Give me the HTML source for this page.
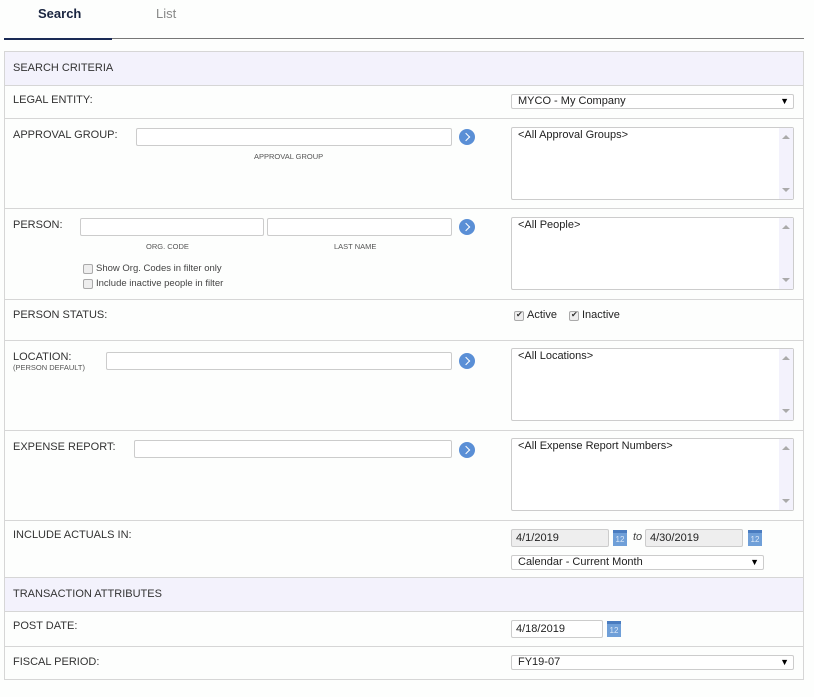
<!DOCTYPE html><html><head><style>
body{margin:0;width:814px;height:697px;background:#fdfefd;font-family:"Liberation Sans",sans-serif;font-size:11px;color:#222;position:relative;overflow:hidden}
.a{position:absolute}
.lbl{position:absolute;left:13px;font-size:11px;color:#333}
.hr{position:absolute;left:4px;width:800px;height:1px;background:#d6d6d6}
.hd{position:absolute;left:5px;width:798px;background:#f3f2fc}
.in{position:absolute;border:1px solid #ccc;border-radius:2px;background:#fff;height:18px;box-sizing:border-box}
.btn{position:absolute;width:16px;height:16px;border-radius:50%;background:#5a8fd6}
.btn:after{content:"";position:absolute;left:4px;top:4.5px;width:5px;height:5px;border-top:1.2px solid #fff;border-right:1.2px solid #fff;transform:rotate(45deg)}
.lb{position:absolute;left:511px;width:283px;height:73px;border:1px solid #ccc;border-radius:2px;background:#fff;box-sizing:border-box}
.lb span{position:absolute;left:6px;top:1px}
.sb{position:absolute;right:0;top:0;width:14px;height:100%;background:#f3f2fc}
.sb:before{content:"";position:absolute;left:3px;top:7px;border:4px solid transparent;border-bottom:4px solid #aaa;border-top:0}
.sb:after{content:"";position:absolute;left:3px;bottom:7px;border:4px solid transparent;border-top:4px solid #aaa;border-bottom:0}
.sel{position:absolute;height:15px;border:1px solid #ccc;border-radius:2px;background:#fff;box-sizing:border-box;font-size:11px;line-height:13px;padding-left:6px}
.sel:after{content:"▼";position:absolute;right:4px;top:0;font-size:9px;color:#000}
.sm{position:absolute;font-size:7.5px;color:#555}
.cb{position:absolute;width:8px;height:8px;border:1px solid #aaa;background:#eee;border-radius:2px}
.ck:after{content:"✔";position:absolute;left:1px;top:-2px;font-size:8px;color:#333}
.cal{position:absolute;width:14px;height:16px;background:#6f9fd8;border-top:3px solid #4a7cc0;box-sizing:border-box;color:#dbe8f8;font-size:8px;text-align:center;line-height:13px}
</style></head><body>
<div class="a" style="left:38px;top:6px;font-size:13px;font-weight:bold;color:#1a2540">Search</div>
<div class="a" style="left:156px;top:6px;font-size:13px;color:#888">List</div>
<div class="a" style="left:4px;top:38px;width:800px;height:1px;background:#777"></div>
<div class="a" style="left:4px;top:38px;width:108px;height:2px;background:#1a2a55"></div>
<div class="a" style="left:4px;top:51px;width:800px;height:629px;border:1px solid #d6d6d6;box-sizing:border-box"></div>
<div class="hd" style="top:52px;height:33px"></div>
<div class="hd" style="top:578px;height:33px"></div>
<div class="lbl" style="top:62px">SEARCH CRITERIA</div>
<div class="hr" style="top:85px"></div>
<div class="lbl" style="top:94px">LEGAL ENTITY:</div>
<div class="sel" style="left:511px;top:94px;width:283px">MYCO - My Company</div>
<div class="hr" style="top:118px"></div>
<div class="lbl" style="top:129px">APPROVAL GROUP:</div>
<div class="in" style="left:136px;top:128px;width:316px"></div>
<div class="sm" style="left:254px;top:152px">APPROVAL GROUP</div>
<div class="btn" style="left:459px;top:129px"></div>
<div class="lb" style="top:127px"><span>&lt;All Approval Groups&gt;</span><div class="sb"></div></div>
<div class="hr" style="top:208px"></div>
<div class="lbl" style="top:219px">PERSON:</div>
<div class="in" style="left:80px;top:218px;width:184px"></div>
<div class="in" style="left:267px;top:218px;width:185px"></div>
<div class="sm" style="left:146px;top:242px">ORG. CODE</div>
<div class="sm" style="left:334px;top:242px">LAST NAME</div>
<div class="btn" style="left:459px;top:219px"></div>
<div class="cb" style="left:83px;top:264px"></div><div class="a" style="left:96px;top:263px;font-size:9.5px;color:#444">Show Org. Codes in filter only</div>
<div class="cb" style="left:83px;top:279px"></div><div class="a" style="left:96px;top:278px;font-size:9.5px;color:#444">Include inactive people in filter</div>
<div class="lb" style="top:217px"><span>&lt;All People&gt;</span><div class="sb"></div></div>
<div class="hr" style="top:299px"></div>
<div class="lbl" style="top:309px">PERSON STATUS:</div>
<div class="cb ck" style="left:514px;top:311px"></div><div class="a" style="left:527px;top:309px">Active</div>
<div class="cb ck" style="left:569px;top:311px"></div><div class="a" style="left:582px;top:309px">Inactive</div>
<div class="hr" style="top:340px"></div>
<div class="lbl" style="top:351px">LOCATION:</div>
<div class="sm" style="left:13px;top:363px">(PERSON DEFAULT)</div>
<div class="in" style="left:106px;top:352px;width:346px"></div>
<div class="btn" style="left:459px;top:353px"></div>
<div class="lb" style="top:348px"><span>&lt;All Locations&gt;</span><div class="sb"></div></div>
<div class="hr" style="top:430px"></div>
<div class="lbl" style="top:441px">EXPENSE REPORT:</div>
<div class="in" style="left:134px;top:440px;width:318px"></div>
<div class="btn" style="left:459px;top:442px"></div>
<div class="lb" style="top:438px"><span>&lt;All Expense Report Numbers&gt;</span><div class="sb"></div></div>
<div class="hr" style="top:520px"></div>
<div class="lbl" style="top:529px">INCLUDE ACTUALS IN:</div>
<div class="in" style="left:511px;top:529px;width:98px;background:#eee;padding:2px 0 0 4px">4/1/2019</div>
<div class="cal" style="left:613px;top:530px">12</div>
<div class="a" style="left:633px;top:531px;font-style:italic;color:#444">to</div>
<div class="in" style="left:645px;top:529px;width:98px;background:#eee;padding:2px 0 0 4px">4/30/2019</div>
<div class="cal" style="left:748px;top:530px">12</div>
<div class="sel" style="left:511px;top:555px;width:253px">Calendar - Current Month</div>
<div class="hr" style="top:577px"></div>
<div class="lbl" style="top:588px">TRANSACTION ATTRIBUTES</div>
<div class="hr" style="top:611px"></div>
<div class="lbl" style="top:620px">POST DATE:</div>
<div class="in" style="left:511px;top:620px;width:92px;padding:2px 0 0 4px">4/18/2019</div>
<div class="cal" style="left:607px;top:621px">12</div>
<div class="hr" style="top:646px"></div>
<div class="lbl" style="top:656px">FISCAL PERIOD:</div>
<div class="sel" style="left:511px;top:655px;width:283px">FY19-07</div>
</body></html>
